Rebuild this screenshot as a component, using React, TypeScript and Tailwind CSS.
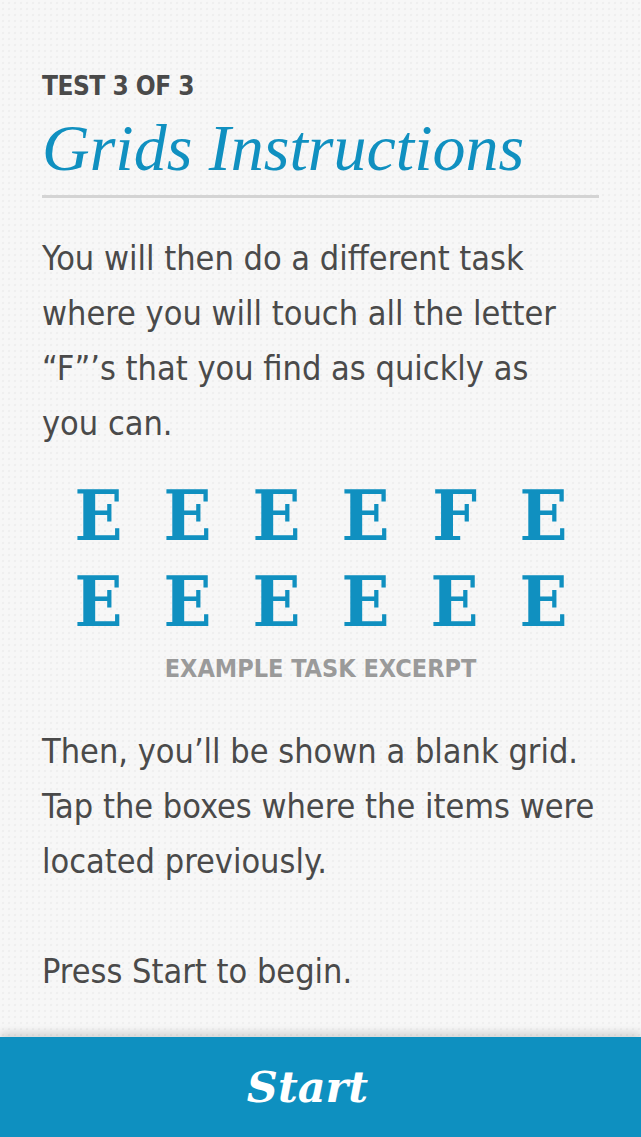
import React from "react";

export default function App() {
  const rows = [
    ["E", "E", "E", "E", "F", "E"],
    ["E", "E", "E", "E", "E", "E"],
  ];
  const bodyText =
    "text-[34px] leading-[55px] text-[#4a4a4a] font-['DejaVu_Sans_Condensed','DejaVu_Sans',sans-serif]";
  return (
    <div className="w-[641px] h-[1137px] flex flex-col bg-[#f7f7f7] bg-[radial-gradient(circle,#efefef_1px,transparent_1.6px)] bg-[length:6px_6px] overflow-hidden">
      <div className="flex-1 pl-[42px] pr-[42px] pt-[71px]">
        <div className="text-[26px] leading-[30px] font-bold tracking-[-0.5px] text-[#4a4a4a] font-['DejaVu_Sans_Condensed','DejaVu_Sans',sans-serif]">
          TEST 3 OF 3
        </div>
        <h1 className="mt-[15px] text-[66px] leading-[64px] italic text-[#1090c0] pb-[15px] border-b-[3px] border-[#d4d4d4] font-['Liberation_Serif',serif]">
          Grids Instructions
        </h1>
        <p className={`mt-[33px] w-[540px] ${bodyText}`}>
          You will then do a different task where you will touch all the letter “F”’s that you find as quickly as you can.
        </p>
        <div className="mt-[22px] ml-[12px] w-[534px] flex flex-col">
          {rows.map((r, i) => (
            <div key={i} className="grid grid-cols-6">
              {r.map((c, j) => (
                <div
                  key={j}
                  className="text-center text-[70px] leading-[86px] font-bold text-[#1090c0] font-['DejaVu_Serif_Condensed','DejaVu_Serif',serif]"
                >
                  {c}
                </div>
              ))}
            </div>
          ))}
        </div>
        <div className="mt-[9px] text-center text-[25px] leading-[30px] font-bold text-[#9a9a9a] font-['DejaVu_Sans_Condensed','DejaVu_Sans',sans-serif]">
          EXAMPLE TASK EXCERPT
        </div>
        <p className={`mt-[40px] ${bodyText}`}>
          Then, you’ll be shown a blank grid. Tap the boxes where the items were located previously.
        </p>
        <p className={`mt-[55px] ${bodyText}`}>Press Start to begin.</p>
      </div>
      <div className="h-[100px] shrink-0 bg-[#0e90c0] shadow-[0_-5px_8px_rgba(0,0,0,0.13)] flex items-center justify-center pr-[26px]">
        <span className="text-white text-[43px] leading-[50px] font-bold italic font-['DejaVu_Serif',serif]">
          Start
        </span>
      </div>
    </div>
  );
}
